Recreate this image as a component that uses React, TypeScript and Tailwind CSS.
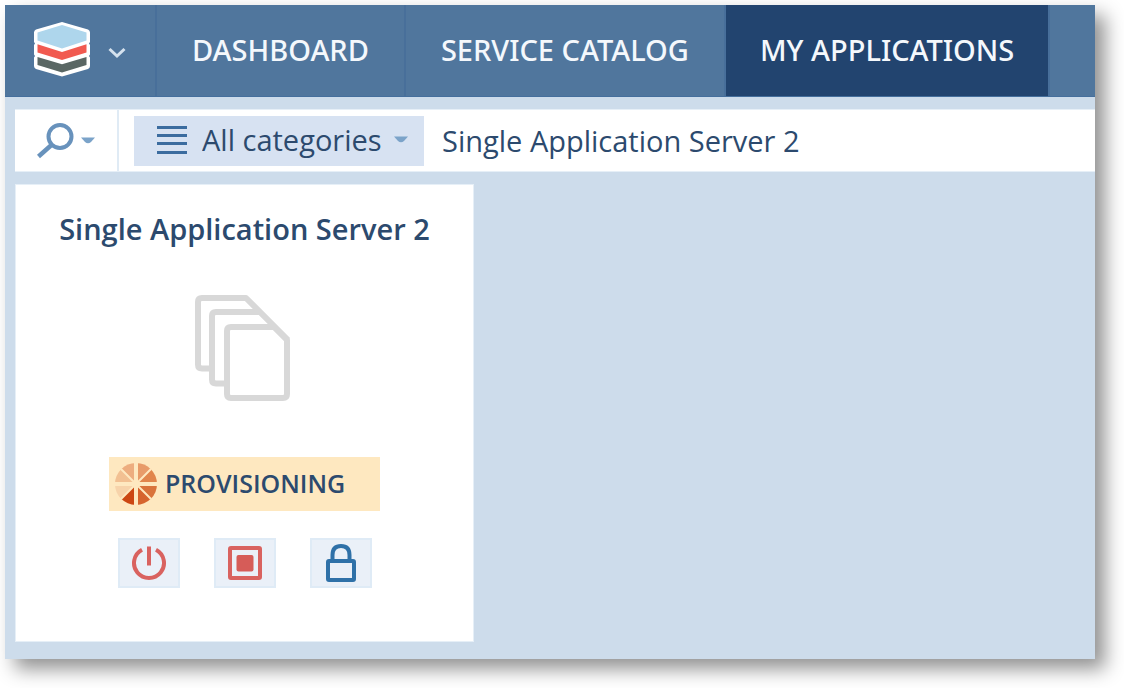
import React from "react";

function Logo() {
  return (
    <svg width="60" height="60" viewBox="0 0 60 60" aria-hidden="true">
      <path
        d="M30 3L56 10.5Q58 11.5 58 13.5V23L57 24.5L58 26V35.5L57 37L58 38.500V47Q58 49 56 50L30 57.500L4 50Q2 49 2 47V38.500L3 37L2 35.500V26L3 24.500L2 23V13.500Q2 11.500 4 10.500Z"
        fill="#fff"
      />
      <path d="M30 6L54.500 13.500V21.500L30 29.500L5.500 21.500V13.500Z" fill="#aed6ec" />
      <path d="M5.500 25.200L30 33L54.500 25.200V33.500L30 41L5.500 33.500Z" fill="#f15a50" />
      <path d="M5.500 38L30 45.300L54.500 38V46L30 53.500L5.500 46Z" fill="#5a6764" />
    </svg>
  );
}

function ChevronIcon() {
  return (
    <svg width="18" height="12" viewBox="0 0 18 12" fill="none" stroke="#d5e2ee" strokeWidth="3" aria-hidden="true">
      <path d="M1.500 2L9 9L16.500 2" />
    </svg>
  );
}

function Caret() {
  return (
    <svg width="14" height="7" viewBox="0 0 14 7" fill="#7ba3c9" className="shrink-0" aria-hidden="true">
      <path d="M0 0.500H14L10 5Q7 7.500 4 5Z" />
    </svg>
  );
}

function SearchIcon() {
  return (
    <svg width="38" height="36" viewBox="0 0 38 36" fill="none" stroke="#6892bc" aria-hidden="true">
      <circle cx="23" cy="13.500" r="11.500" strokeWidth="4" />
      <path d="M15 21.500L1.500 33.500" strokeWidth="4.500" />
    </svg>
  );
}

function ListIcon() {
  return (
    <svg width="30" height="30" viewBox="0 0 30 30" fill="#3b6c9f" className="shrink-0" aria-hidden="true">
      <path d="M0 1h30v3H0zM0 9h30v3H0zM0 17h30v3H0zM0 26h30v3H0z" />
    </svg>
  );
}

function PagesIcon() {
  return (
    <svg
      width="98"
      height="108"
      viewBox="0 0 98 108"
      fill="none"
      stroke="#d8d8d8"
      strokeWidth="6"
      strokeLinejoin="round"
      aria-hidden="true"
    >
      <path d="M16 74.500H8Q4 74.500 4 70.500V8Q4 4 8 4H52L94 46" />
      <path d="M31 89.500H22Q18 89.500 18 85.500V22Q18 18 22 18H65" />
      <path d="M80 33H37Q33 33 33 37V100Q33 104 37 104H89Q93 104 93 100V46L80 33" />
    </svg>
  );
}

const wedges = [
  { angle: 0, color: "#edad7f" },
  { angle: 45, color: "#e89b69" },
  { angle: 90, color: "#e1854c" },
  { angle: 135, color: "#d9733b" },
  { angle: 180, color: "#d6642e" },
  { angle: 225, color: "#cc4713" },
  { angle: 270, color: "#f7d3aa" },
  { angle: 315, color: "#f2c092" },
];

function Spinner() {
  return (
    <svg width="42" height="42" viewBox="-21 -21 42 42" className="shrink-0" aria-hidden="true">
      {wedges.map((w) => (
        <path key={w.angle} d="M0 0V-21A21 21 0 0 0 -14.850 -14.850Z" fill={w.color} transform={`rotate(${w.angle})`} />
      ))}
      <path d="M0 -21V21M-21 0H21" stroke="#fee8c0" strokeWidth="4" />
      <path d="M-15 -15L15 15M-15 15L15 -15" stroke="#fee8c0" strokeWidth="2" />
    </svg>
  );
}

function PowerIcon() {
  return (
    <svg width="36" height="36" viewBox="0 0 36 36" fill="none" stroke="#d9625f" strokeWidth="4" aria-hidden="true">
      <path d="M11 4.800A15 15 0 1 0 25 4.800M18 1.500V20.500" />
    </svg>
  );
}

function StopIcon() {
  return (
    <svg width="34" height="34" viewBox="0 0 34 34" fill="none" aria-hidden="true">
      <rect x="2" y="2" width="30" height="30" rx="1" stroke="#d9625f" strokeWidth="4" />
      <rect x="8.500" y="9" width="17" height="16.500" rx="2" fill="#d65c58" />
    </svg>
  );
}

function LockIcon() {
  return (
    <svg width="30" height="38" viewBox="0 0 30 38" fill="none" stroke="#2f71a8" strokeWidth="4" aria-hidden="true">
      <rect x="2" y="17" width="26" height="19" rx="1" />
      <path d="M6.500 17V11Q6.500 2 15 2Q23.500 2 23.500 11V17" />
    </svg>
  );
}

const navItems = [
  { label: "DASHBOARD", active: false },
  { label: "SERVICE CATALOG", active: false },
  { label: "MY APPLICATIONS", active: true },
];

const actions = [
  { label: "Power off", icon: <PowerIcon /> },
  { label: "Stop", icon: <StopIcon /> },
  { label: "Lock", icon: <LockIcon /> },
];

export default function App() {
  return (
    <div className="bg-white pt-[5px] pr-[29px] pb-[29px] pl-[5px] font-['Open_Sans','Noto_Sans',sans-serif] text-[#2c4a6e]">
      <div className="bg-[#cddceb] pb-[17px] shadow-[10px_10px_18px_rgba(0,0,0,0.43)]">
        <header className="flex h-[92px] border-b border-[#456f9d] bg-[#50769d]">
          <button
            type="button"
            aria-label="Switch service"
            className="flex w-[152px] shrink-0 items-center gap-4 border-r-2 border-[#486f9a] pb-1 pl-[27px]"
          >
            <Logo />
            <span className="pt-2">
              <ChevronIcon />
            </span>
          </button>
          <nav className="flex font-['Noto_Sans','Open_Sans',sans-serif]">
            {navItems.map((item) => (
              <a
                key={item.label}
                href="#"
                aria-current={item.active ? "page" : undefined}
                className={
                  item.active
                    ? "flex items-center border-r-2 border-[#486f9a] bg-[#22446f] px-[34px] pb-0.5 text-[29px] font-medium whitespace-nowrap text-[#f4f8fc]"
                    : "flex items-center border-r-2 border-[#486f9a] px-[35px] pb-0.5 text-[29px] font-medium whitespace-nowrap text-[#f4f8fc]"
                }
              >
                {item.label}
              </a>
            ))}
          </nav>
        </header>

        <div className="mt-3 ml-[10px] flex h-[63px] border-y border-[#e6eff7] bg-white">
          <button
            type="button"
            aria-label="Search options"
            className="flex w-[104px] shrink-0 items-center gap-1.5 border-r-2 border-[#e0ebf5] pl-[22px]"
          >
            <SearchIcon />
            <Caret />
          </button>
          <div className="flex grow items-center gap-[18px] pl-[15px]">
            <div className="flex h-[50px] w-[290px] shrink-0 items-center bg-[#d7e2f2] pr-4 pb-0.5 pl-[23px]">
              <ListIcon />
              <select
                aria-label="Category"
                className="ml-[15px] min-w-0 grow appearance-none bg-transparent text-[29px] leading-10 outline-none"
              >
                <option>All categories</option>
              </select>
              <Caret />
            </div>
            <input
              type="text"
              aria-label="Search applications"
              defaultValue="Single Application Server 2"
              className="min-w-0 grow bg-transparent text-[29px] leading-10 outline-none"
            />
          </div>
        </div>

        <main className="mt-3 ml-[10px] flex">
          <article className="flex w-[459px] flex-col items-center border border-[#e6eff7] bg-white pt-6 pb-[53px]">
            <h2 className="text-[29px] leading-10 font-semibold">Single Application Server 2</h2>
            <div className="mt-[45px] pr-1">
              <PagesIcon />
            </div>
            <div className="mt-[55px] flex h-[54px] w-[271px] items-center gap-2 bg-[#fee8c0] pl-1.5 text-[25px] font-semibold">
              <Spinner />
              PROVISIONING
            </div>
            <div className="mt-[27px] flex gap-[34px]">
              {actions.map((action) => (
                <button
                  key={action.label}
                  type="button"
                  aria-label={action.label}
                  className="flex h-[50px] w-[62px] items-center justify-center border-2 border-[#dfebf6] bg-[#eaf0f8]"
                >
                  {action.icon}
                </button>
              ))}
            </div>
          </article>
        </main>
      </div>
    </div>
  );
}
